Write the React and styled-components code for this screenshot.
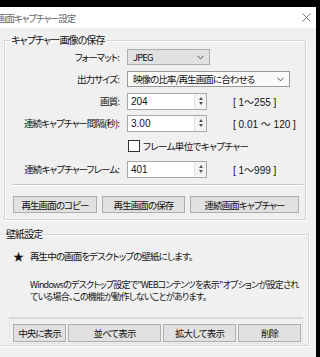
import React from 'react'
import styled, { createGlobalStyle } from 'styled-components'

const GlobalStyle = createGlobalStyle`
  body {
    margin: 0;
    background: #000;
    font-family: "Noto Sans CJK JP", "Noto Sans", sans-serif;
  }
`

const Screen = styled.div`
  width: 320px;
  height: 357px;
  background: #000;
  display: flex;
  flex-direction: column;
  overflow: hidden;
`

const TopStrip = styled.div`
  height: 7px;
  flex: none;
`

const Window = styled.div`
  width: 316px;
  flex: 1;
  background: #f0f0f0;
  display: flex;
  flex-direction: column;
  overflow: hidden;
  font-family: "Noto Sans CJK JP", "Noto Sans", sans-serif;
  font-feature-settings: "palt";
  font-size: 9.5px;
  letter-spacing: -0.9px;
  color: #111;
`

const TitleBar = styled.div`
  height: 21px;
  flex: none;
  background: #fff;
  display: flex;
  align-items: center;
`

const Title = styled.span`
  margin-left: -3px;
  font-size: 9.5px;
  letter-spacing: -1.1px;
  color: #666;
`

const Close = styled.svg`
  margin-left: auto;
  margin-right: 5px;
  width: 9px;
  height: 9px;
`

const Client = styled.div`
  padding-top: 6px;
  display: flex;
  flex-direction: column;
`

const Group = styled.fieldset`
  margin: ${p => p.$top || 0}px 0 0 ${p => p.$left}px;
  width: ${p => p.$width}px;
  box-sizing: border-box;
  padding: ${p => p.$pad};
  border: 1px solid #d5d5d5;
  box-shadow: inset 1px 1px 0 #fff, 1px 1px 0 #fff;
  display: flex;
  flex-direction: column;
  min-width: 0;
`

const Legend = styled.legend`
  margin-left: ${p => p.$indent}px;
  padding: 0 1px;
  font-size: 10px;
  line-height: 12px;
`

const Row = styled.div`
  display: flex;
  align-items: center;
  height: 16px;
  margin-top: ${p => p.$gap}px;
`

const Label = styled.label`
  width: 114px;
  flex: none;
  text-align: right;
  white-space: nowrap;
  margin-right: 8px;
`

const Select = styled.div`
  width: ${p => p.$width}px;
  height: 16px;
  box-sizing: border-box;
  border: 1px solid ${p => (p.$light ? '#9a9a9a' : '#adadad')};
  background: ${p => (p.$light ? '#fafafa' : '#e1e1e1')};
  display: flex;
  align-items: center;
  padding: 0 5px;
  white-space: nowrap;
`

const SelectText = styled.span`
  flex: 1;
  overflow: hidden;
`

const Chevron = styled.svg`
  width: 7px;
  height: 5px;
  flex: none;
`

const Field = styled.div`
  width: 80px;
  height: 17px;
  box-sizing: border-box;
  border: 1px solid #a8a8a8;
  background: #fff;
  display: flex;
  align-items: stretch;
`

const Value = styled.span`
  flex: 1;
  padding-left: 3px;
  font-family: "Liberation Sans", sans-serif;
  font-size: 10px;
  letter-spacing: 0;
  line-height: 15px;
`

const Spin = styled.div`
  width: 11px;
  background: #f4f4f4;
  border-left: 1px solid #e4e4e4;
  display: flex;
  flex-direction: column;
  align-items: center;
  justify-content: center;
  gap: 2px;
`

const Arrow = styled.span`
  width: 0;
  height: 0;
  border-left: 2.5px solid transparent;
  border-right: 2.5px solid transparent;
  ${p => (p.$up ? 'border-bottom: 3px solid #555;' : 'border-top: 3px solid #555;')}
`

const Range = styled.span`
  margin-left: 26px;
  font-family: "Liberation Sans", "Noto Sans CJK JP", sans-serif;
  font-size: 10px;
  letter-spacing: 0;
  white-space: nowrap;
`

const CheckRow = styled.label`
  display: flex;
  align-items: center;
  height: 12px;
  margin: 9px 0 0 123px;
  white-space: nowrap;
  letter-spacing: -0.6px;
`

const Box = styled.span`
  width: 12px;
  height: 12px;
  box-sizing: border-box;
  border: 1px solid #333;
  background: #fff;
  margin-right: 3px;
`

const Separator = styled.div`
  margin: 7px 2px 0 7px;
  border-top: 1px solid #c8c8c8;
  border-bottom: 1px solid #fff;
`

const ButtonRow = styled.div`
  display: flex;
  gap: ${p => p.$gap}px;
  margin: ${p => p.$margin};
`

const Button = styled.button`
  width: ${p => p.$width}px;
  height: ${p => p.$height || 17}px;
  flex: none;
  box-sizing: border-box;
  padding: 0;
  border: 1px solid #adadad;
  background: #e1e1e1;
  font: inherit;
  letter-spacing: inherit;
  font-feature-settings: inherit;
  color: #111;
  white-space: nowrap;
`

const StarLine = styled.div`
  display: flex;
  align-items: center;
  height: 12px;
  margin: 10px 0 0 15px;
  white-space: nowrap;
`

const Star = styled.span`
  width: 17px;
  font-size: 11px;
  letter-spacing: 0;
`

const Note = styled.p`
  margin: 17px 0 0 32px;
  font-size: 9px;
  letter-spacing: -0.75px;
  line-height: 12px;
  white-space: nowrap;
`

const Strip = styled.div`
  margin: 14px 0 0 11px;
  width: 294px;
  box-sizing: border-box;
  padding: 5px 2px 1px 3px;
  border-top: 2px solid #dadada;
  border-left: 1px solid #e4e4e4;
  border-right: 1px solid #e4e4e4;
  border-bottom: 1px solid #e4e4e4;
`

const SelectBox = ({ width, light, children }) => (
  <Select $width={width} $light={light}>
    <SelectText>{children}</SelectText>
    <Chevron viewBox="0 0 7 5">
      <polyline points="0.5,0.8 3.5,3.8 6.5,0.8" fill="none" stroke="#444" strokeWidth="1" />
    </Chevron>
  </Select>
)

const NumberRow = ({ label, value, range, gap }) => (
  <Row $gap={gap}>
    <Label>{label}</Label>
    <Field>
      <Value>{value}</Value>
      <Spin>
        <Arrow $up />
        <Arrow />
      </Spin>
    </Field>
    <Range>{range}</Range>
  </Row>
)

export default function App() {
  return (
    <Screen>
      <GlobalStyle />
      <TopStrip />
      <Window>
        <TitleBar>
          <Title>画面キャプチャー設定</Title>
          <Close viewBox="0 0 9 9">
            <path d="M0.5 0.5 L8.5 8.5 M8.5 0.5 L0.5 8.5" stroke="#777" strokeWidth="1" />
          </Close>
        </TitleBar>
        <Client>
          <Group $left={4} $width={302} $pad="0 0 6px 0">
            <Legend $indent={5}>キャプチャー画像の保存</Legend>
            <Row $gap={3}>
              <Label>フォーマット:</Label>
              <SelectBox width={83}>JPEG</SelectBox>
            </Row>
            <Row $gap={6}>
              <Label>出力サイズ:</Label>
              <SelectBox width={163} light>映像の比率/再生画面に合わせる</SelectBox>
            </Row>
            <NumberRow gap={6} label="画質:" value="204" range="[ 1～255 ]" />
            <NumberRow gap={6} label="連続キャプチャー間隔(秒):" value="3.00" range="[ 0.01 ～ 120 ]" />
            <CheckRow>
              <Box />
              フレーム単位でキャプチャー
            </CheckRow>
            <NumberRow gap={9} label="連続キャプチャーフレーム:" value="401" range="[ 1～999 ]" />
            <Separator />
            <ButtonRow $gap={5} $margin="10px 0 0 8px">
              <Button $width={84}>再生画面のコピー</Button>
              <Button $width={83}>再生画面の保存</Button>
              <Button $width={109}>連続画面キャプチャー</Button>
            </ButtonRow>
          </Group>
          <Group $left={-3} $width={312} $top={8} $pad="0 0 1px 0">
            <Legend $indent={7}>壁紙設定</Legend>
            <StarLine>
              <Star>★</Star>
              再生中の画面をデスクトップの壁紙にします。
            </StarLine>
            <Note>
              Windowsのデスクトップ設定で"WEBコンテンツを表示"オプションが設定され
              <br />
              ている場合、この機能が動作しないことがあります。
            </Note>
            <Strip>
              <ButtonRow $gap={2} $margin="0">
                <Button $width={53} $height={18}>中央に表示</Button>
                <Button $width={93} $height={18}>並べて表示</Button>
                <Button $width={73} $height={18}>拡大して表示</Button>
                <Button $width={63} $height={18}>削除</Button>
              </ButtonRow>
            </Strip>
          </Group>
        </Client>
      </Window>
    </Screen>
  )
}
